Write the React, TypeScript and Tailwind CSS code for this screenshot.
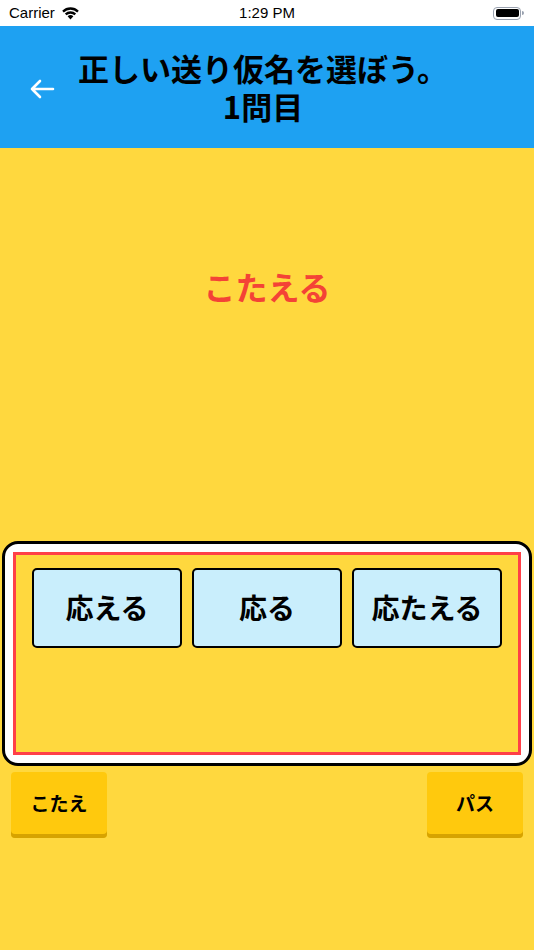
import React from "react";

const jp = { fontFamily: '"Noto Sans CJK JP", "Noto Sans", sans-serif' };

function StatusBar() {
  return (
    <div
      className="relative flex h-[26px] items-center justify-between bg-white px-[9px] text-[15px] text-black"
      style={{ fontFamily: '"Liberation Sans", Arial, sans-serif' }}
    >
      <div className="flex items-center gap-[6px]">
        <span>Carrier</span>
        <svg width="19" height="14" viewBox="0 0 19 14">
          <path d="M9.5 13.5 L6.6 10.3 A4.2 4.2 0 0 1 12.4 10.3 Z" fill="#000" />
          <path d="M3.9 7.6 A8 8 0 0 1 15.1 7.6 L13.5 9.3 A5.7 5.7 0 0 0 5.5 9.3 Z" fill="#000" />
          <path d="M1.2 4.7 A12 12 0 0 1 17.8 4.7 L16.2 6.4 A9.7 9.7 0 0 0 2.8 6.4 Z" fill="#000" />
        </svg>
      </div>
      <span className="absolute left-1/2 -translate-x-1/2 font-medium">1:29 PM</span>
      <div className="flex items-center pr-[1px]">
        <div className="flex h-[13px] w-[28px] items-center rounded-[4px] border border-gray-400 p-[1.5px]">
          <div className="h-full w-full rounded-[2px] bg-black" />
        </div>
        <div className="ml-[1px] h-[4px] w-[2px] rounded-r-sm bg-gray-400" />
      </div>
    </div>
  );
}

function Header() {
  return (
    <div className="relative flex h-[122px] items-center justify-center bg-[#1ea1f2]">
      <svg
        className="absolute left-[29px] top-[52px]"
        width="26"
        height="22"
        viewBox="0 0 26 22"
        fill="none"
        stroke="#fff"
        strokeWidth="2.6"
        strokeLinecap="round"
        strokeLinejoin="round"
      >
        <path d="M24 11 H3 M11 3 L3 11 L11 19" />
      </svg>
      <div
        className="-ml-[8px] text-center text-[31px] font-semibold leading-[38px] text-black"
        style={jp}
      >
        <div>正しい送り仮名を選ぼう。</div>
        <div>1問目</div>
      </div>
    </div>
  );
}

function Choice({ label }: { label: string }) {
  return (
    <button
      className="flex h-[80px] w-[150px] items-center justify-center rounded-[5px] border-2 border-black bg-[#c9eefc] pb-[2px] text-[28px] font-bold text-black"
      style={jp}
    >
      {label}
    </button>
  );
}

function BottomButton({ label }: { label: string }) {
  return (
    <button
      className="flex h-[66px] w-[96px] items-center justify-center rounded-[4px] bg-[#ffc90d] pb-[4px] text-[19px] font-bold text-black shadow-[inset_0_-4px_0_#d7a300]"
      style={jp}
    >
      {label}
    </button>
  );
}

export default function App() {
  return (
    <div className="flex h-[950px] w-[534px] flex-col overflow-hidden bg-[#ffd83e]">
      <StatusBar />
      <Header />

      <div className="flex h-[393px] items-start justify-center pt-[116px]">
        <div className="text-[32px] font-bold leading-[44px] text-[#f44336]" style={jp}>
          こたえる
        </div>
      </div>

      <div className="mx-[2px] rounded-[16px] border-[3px] border-black bg-white p-[8px]">
        <div className="h-[203px] border-[3px] border-[#ff4048] bg-[#ffd83e] pl-[16px] pt-[13px]">
          <div className="flex gap-[10px]">
            <Choice label="応える" />
            <Choice label="応る" />
            <Choice label="応たえる" />
          </div>
        </div>
      </div>

      <div className="flex justify-between px-[11px] pt-[6px]">
        <BottomButton label="こたえ" />
        <BottomButton label="パス" />
      </div>
    </div>
  );
}
